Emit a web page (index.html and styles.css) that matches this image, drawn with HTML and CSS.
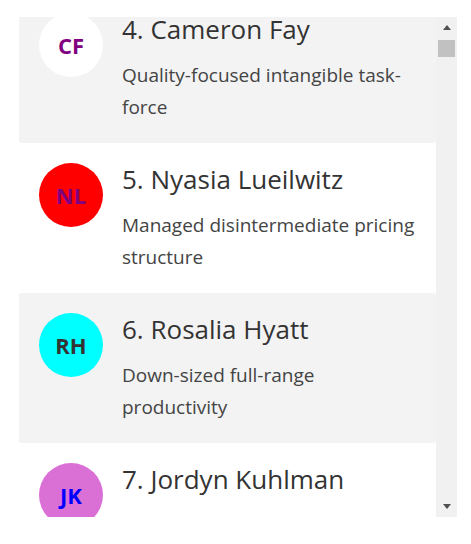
FILE: index.html
```html
<!DOCTYPE html>
<html lang="en">
<head>
  <meta charset="UTF-8" />
  <title>People list</title>
  <link rel="stylesheet" href="styles.css">
</head>
<body>

<div class="page">
  <div class="frame">
    <!-- Scrollable list, items are built by script.js -->
    <ul class="people" id="people"></ul>

    <!-- Classic scrollbar, kept in sync with the list -->
    <div class="scrollbar" aria-hidden="true">
      <div class="sb-btn"><span class="arrow up"></span></div>
      <div class="sb-track" id="track">
        <div class="sb-thumb" id="thumb"></div>
      </div>
      <div class="sb-btn"><span class="arrow down"></span></div>
    </div>
  </div>
</div>

<script src="script.js"></script>
</body>
</html>
```

FILE: styles.css
```css
body {
  margin: 0;
  font-family: "Open Sans", "Noto Sans", sans-serif;
  background: #fff;
}

.page {
  padding: 17px 14px 0 19px;
}

.frame {
  display: flex;
  width: 438px;
  height: 500px;
}

/* The scrolling box */
.people {
  flex: 1;
  list-style: none;
  margin: 0;
  padding: 0;
  overflow-y: scroll;
  scrollbar-width: none;
}

/* Scrollbar */
.scrollbar {
  flex: none;
  width: 21px;
  display: flex;
  flex-direction: column;
  background: #f1f1f1;
}

.sb-btn {
  height: 21px;
  display: flex;
  align-items: center;
  justify-content: center;
}

.arrow {
  width: 0;
  height: 0;
  border-left: 4.5px solid transparent;
  border-right: 4.5px solid transparent;
}

.arrow.up {
  border-bottom: 5px solid #505050;
}

.arrow.down {
  border-top: 5px solid #505050;
}

.sb-track {
  flex: 1;
  position: relative;
}

.sb-thumb {
  position: absolute;
  left: 2px;
  top: 0;
  width: 17px;
  height: 17px;
  background: #c1c1c1;
}

/* One person */
.person {
  display: flex;
  gap: 19px;
  height: 150px;
  box-sizing: border-box;
  padding: 20px;
  border-radius: 3px;
  background: #fff;
}

.person.even {
  background: #f3f3f3;
}

.avatar {
  flex: none;
  width: 64px;
  height: 64px;
  border-radius: 50%;
  display: flex;
  align-items: center;
  justify-content: center;
  font-weight: bold;
  font-size: 22px;
}

.info {
  min-width: 0;
}

.name {
  margin: 0;
  font-size: 26px;
  font-weight: normal;
  line-height: 32px;
  color: #333;
}

.about {
  margin: 14px 0 0;
  font-size: 19px;
  line-height: 32px;
  color: #444;
}
```

FILE: script.js
```js
// Les premiers éléments de la liste, tels qu'affichés
const people = [
  { name: "Kamren Bogisich",  about: "Synergistic exuding hierarchy",          bg: "#ffd700", fg: "#008000" },
  { name: "Lela Stroman",     about: "Reverse-engineered motivating matrix",   bg: "#add8e6", fg: "#800000" },
  { name: "Tatum Gerlach",    about: "Configurable global archive",            bg: "#90ee90", fg: "#000080" },
  { name: "Cameron Fay",      about: "Quality-focused intangible task-force",  bg: "#ffffff", fg: "#800080" },
  { name: "Nyasia Lueilwitz", about: "Managed disintermediate pricing structure", bg: "#ff0000", fg: "#800080" },
  { name: "Rosalia Hyatt",    about: "Down-sized full-range productivity",     bg: "#00ffff", fg: "#333333" },
  { name: "Jordyn Kuhlman",   about: "Multi-layered didactic collaboration",   bg: "#da70d6", fg: "#0000ff" },
  { name: "Eliane Hodkiewicz", about: "Adaptive holistic interface",           bg: "#ffa500", fg: "#ffffff" }
];

// Le reste de la liste est généré
const first = ["Alda", "Brock", "Celia", "Dorian", "Esta", "Fern", "Gilda", "Hollis", "Ines", "Jasper"];
const last = ["Mraz", "Kunze", "Ortiz", "Bauch", "Hane", "Zulauf", "Wisoky", "Lind", "Runte", "Kihn"];
const words = ["Open-source", "Fundamental", "Robust", "Optimized", "Polarised", "Centralized"];
const ends = ["bandwidth-monitored circuit", "radical encoding", "system engine", "web-enabled alliance", "zero defect moratorium"];
const colors = ["#ffd700", "#add8e6", "#90ee90", "#ffc0cb", "#00ffff", "#da70d6", "#ffa500"];
const inks = ["#800080", "#0000ff", "#333333", "#008000", "#800000"];

for (let i = people.length; i < 1000; i++) {
  people.push({
    name: first[i % first.length] + " " + last[(i * 3) % last.length],
    about: words[i % words.length] + " " + ends[(i * 7) % ends.length],
    bg: colors[i % colors.length],
    fg: inks[(i * 2) % inks.length]
  });
}

const list = document.getElementById('people');
const track = document.getElementById('track');
const thumb = document.getElementById('thumb');

people.forEach((p, i) => {
  const li = document.createElement('li');
  li.className = 'person' + ((i + 1) % 2 === 0 ? ' even' : '');

  const initials = p.name.split(' ').map(w => w[0]).join('');
  const avatar = document.createElement('div');
  avatar.className = 'avatar';
  avatar.textContent = initials;
  avatar.style.background = p.bg;
  avatar.style.color = p.fg;

  const info = document.createElement('div');
  info.className = 'info';
  info.innerHTML = '<h3 class="name"></h3><p class="about"></p>';
  info.querySelector('.name').textContent = (i + 1) + '. ' + p.name;
  info.querySelector('.about').textContent = p.about;

  li.appendChild(avatar);
  li.appendChild(info);
  list.appendChild(li);
});

// Place le pouce selon la position de défilement
function syncThumb() {
  const max = list.scrollHeight - list.clientHeight;
  const room = track.clientHeight - thumb.offsetHeight;
  const top = max > 0 ? list.scrollTop / max * room : 0;
  thumb.style.top = (top + 1) + 'px';
}

list.addEventListener('scroll', syncThumb);

// Position de défilement de la capture
list.scrollTop = 474;
syncThumb();
```
